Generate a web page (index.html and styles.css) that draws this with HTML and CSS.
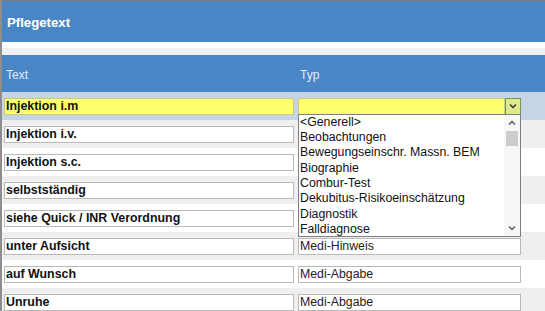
FILE: index.html
```html
<!DOCTYPE html>
<html lang="de">
<head>
    <meta charset="UTF-8">
    <title>Pflegetext</title>
    <link rel="stylesheet" href="styles.css">
</head>
<body>
    <div class="panel">
        <div class="title-bar">Pflegetext</div>
        <div class="spacer"></div>

        <div class="grid-head">
            <span>Text</span>
            <span>Typ</span>
        </div>

        <div class="rows">
            <div class="row selected">
                <div class="field text-field">Injektion i.m</div>
                <div class="select-wrap">
                    <div class="field type-field"></div>
                    <div class="drop-btn">
                        <svg viewBox="0 0 10 10" width="10" height="10"><path d="M2 3.5 5 6.5 8 3.5" fill="none" stroke="#333" stroke-width="1.4"/></svg>
                    </div>
                    <div class="drop-list">
                        <ul>
                            <li>&lt;Generell&gt;</li>
                            <li>Beobachtungen</li>
                            <li>Bewegungseinschr. Massn. BEM</li>
                            <li>Biographie</li>
                            <li>Combur-Test</li>
                            <li>Dekubitus-Risikoeinschätzung</li>
                            <li>Diagnostik</li>
                            <li>Falldiagnose</li>
                        </ul>
                        <div class="scrollbar">
                            <svg class="arrow" viewBox="0 0 10 8" width="10" height="8"><path d="M2 5.5 5 2.5 8 5.5" fill="none" stroke="#555" stroke-width="1.3"/></svg>
                            <div class="thumb"></div>
                            <div class="track"></div>
                            <svg class="arrow" viewBox="0 0 10 8" width="10" height="8"><path d="M2 2.5 5 5.5 8 2.5" fill="none" stroke="#555" stroke-width="1.3"/></svg>
                        </div>
                    </div>
                </div>
            </div>
            <div class="row alt">
                <div class="field text-field">Injektion i.v.</div>
                <div class="field type-field"></div>
            </div>
            <div class="row">
                <div class="field text-field">Injektion s.c.</div>
                <div class="field type-field"></div>
            </div>
            <div class="row alt">
                <div class="field text-field">selbstständig</div>
                <div class="field type-field"></div>
            </div>
            <div class="row">
                <div class="field text-field">siehe Quick / INR Verordnung</div>
                <div class="field type-field"></div>
            </div>
            <div class="row alt">
                <div class="field text-field">unter Aufsicht</div>
                <div class="field type-field">Medi-Hinweis</div>
            </div>
            <div class="row">
                <div class="field text-field">auf Wunsch</div>
                <div class="field type-field">Medi-Abgabe</div>
            </div>
            <div class="row alt">
                <div class="field text-field">Unruhe</div>
                <div class="field type-field">Medi-Abgabe</div>
            </div>
        </div>
    </div>
</body>
</html>
```

FILE: styles.css
```css
:root {
    --blue: #4a86c6;
    --head-text: #e4ecf6;
    --row-alt: #efefef;
    --row-sel: #c6d5e6;
    --field-border: #b9b9b9;
    --yellow: #ffff6e;
    --font-main: 'Liberation Sans', Arial, sans-serif;
}

* {
    margin: 0;
    padding: 0;
    box-sizing: border-box;
}

body {
    width: 545px;
    height: 311px;
    overflow: hidden;
    background: #fff;
    font-family: var(--font-main);
    color: #111;
}

.panel {
    height: 311px;
    border-top: 1px solid #7c7c7c;
    border-left: 2px solid #8e8e8e;
    display: flex;
    flex-direction: column;
}

.panel > * {
    flex-shrink: 0;
}

.title-bar {
    height: 41px;
    background: var(--blue);
    color: #fff;
    font-weight: bold;
    font-size: 13.2px;
    display: flex;
    align-items: center;
    padding-left: 5px;
    padding-top: 2px;
}

.spacer {
    height: 13px;
    background: linear-gradient(#fff 0, #fff 6px, #eef0f2 6px);
}

.grid-head {
    height: 37px;
    background: var(--blue);
    color: var(--head-text);
    font-size: 12px;
    display: grid;
    grid-template-columns: 294px 1fr;
    align-items: center;
    padding-left: 4px;
    padding-top: 3px;
}

.row {
    height: 28px;
    display: grid;
    grid-template-columns: 290px 223px;
    column-gap: 4px;
    align-items: center;
    padding-left: 2px;
    background: #fff;
}

.row.alt {
    background: var(--row-alt);
}

.row.selected {
    background: var(--row-sel);
}

.field {
    height: 17px;
    border: 1px solid var(--field-border);
    background: #fff;
    display: flex;
    align-items: center;
    padding-left: 1px;
    white-space: nowrap;
    overflow: hidden;
}

.text-field {
    font-weight: bold;
    font-size: 12.4px;
}

.type-field {
    font-size: 12.3px;
    color: #222;
}

.selected .field {
    background: var(--yellow);
    border-color: #c9c98a;
}

.select-wrap {
    position: relative;
    display: flex;
}

.select-wrap .type-field {
    flex: 1;
}

.drop-btn {
    width: 16px;
    height: 17px;
    border: 1px solid #6f9a4a;
    background: #dde98c;
    display: flex;
    align-items: center;
    justify-content: center;
}

.drop-list {
    position: absolute;
    top: 16px;
    left: 0;
    width: 223px;
    height: 123px;
    background: #fff;
    border: 1px solid #7e7e7e;
    display: flex;
    z-index: 2;
}

.drop-list ul {
    list-style: none;
    flex: 1;
    font-size: 12.3px;
    color: #111;
    padding-left: 1px;
}

.drop-list li {
    height: 15.4px;
    line-height: 15.4px;
    white-space: nowrap;
}

.scrollbar {
    width: 16px;
    background: #f7f7f7;
    display: flex;
    flex-direction: column;
    align-items: center;
    padding: 2px 0;
}

.scrollbar .arrow {
    margin: 2px 0;
}

.thumb {
    width: 12px;
    height: 15px;
    background: #cdcdcd;
    margin-top: 2px;
}

.track {
    flex: 1;
}
```
